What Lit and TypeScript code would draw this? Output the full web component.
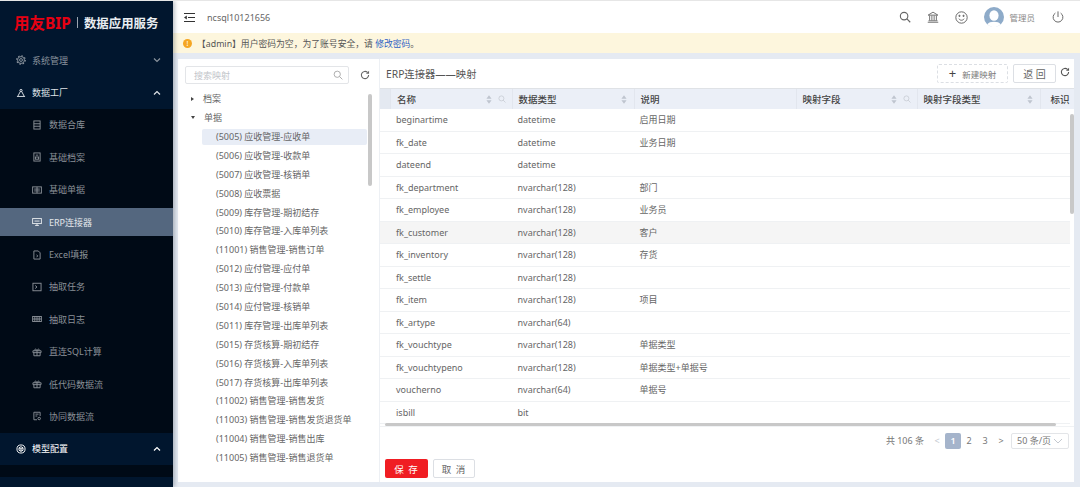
import { LitElement, css, html, svg, type TemplateResult } from 'lit'
import { customElement } from 'lit/decorators.js'

type NavItem = { label: string; icon: TemplateResult; active?: boolean }

const stroke = (body: TemplateResult, size = 10): TemplateResult => html`
  <svg width=${size} height=${size} viewBox="0 0 16 16" fill="none" stroke="currentColor" stroke-width="1.500">${body}</svg>
`

const gear = stroke(svg`<circle cx="8" cy="8" r="5.500"/><circle cx="8" cy="8" r="6.800" stroke-dasharray="2.400 2.900" stroke-width="2"/><circle cx="8" cy="8" r="2.300"/>`)
const nodes = stroke(svg`<circle cx="8" cy="4" r="1.800"/><path d="M7 5.500L3 13M9 5.500l4 7.500M1.500 13.500h13"/>`)
const listDoc = stroke(svg`<rect x="3" y="1.500" width="10" height="13"/><path d="M3 6h10M3 10h10"/>`)
const archive = stroke(svg`<rect x="3" y="1.500" width="10" height="13"/><rect x="5.500" y="8" width="5" height="3.500"/><path d="M6 5h4"/>`)
const slip = stroke(svg`<rect x="1" y="3" width="14" height="10"/><path d="M8 3v10M3.500 6.500h9M3.500 9.500h9"/>`)
const monitor = stroke(svg`<rect x="1" y="2.500" width="14" height="8"/><path d="M8 10.500v3M5 13.500h6M4 6.500h8"/>`)
const fileDot = stroke(svg`<path d="M3 1.500h7l3 3v10H3z"/><path d="M7.500 7.500l1.500 2-1.500 2"/>`)
const terminal = stroke(svg`<rect x="1.500" y="2" width="13" height="12"/><path d="M5 5.500l3 2.500-3 2.500"/>`)
const logbook = stroke(svg`<rect x="1" y="4" width="14" height="8"/><path d="M8 4v8M1 8h14M4.500 4v8M11.500 4v8"/>`)
const gift = stroke(svg`<path d="M1.500 6h13v3h-13zM3 9v5h10V9M8 6v8M5 6c-2-3 2-4 3 0 1-4 5-3 3 0"/>`)
const fileFlow = stroke(svg`<path d="M13 8V2H3v12h5M5.500 5h5M5.500 8h3"/><circle cx="11.500" cy="12" r="2"/>`)
const cube = stroke(svg`<circle cx="8" cy="8" r="6.500"/><path d="M8 4.300l3.200 1.800v3.800L8 11.700 4.800 9.900V6.100zM4.800 6.100L8 8l3.200-1.900M8 8v3.700"/>`)

const SYSTEM: NavItem = { label: '系统管理', icon: gear }
const FACTORY: NavItem = { label: '数据工厂', icon: nodes }
const MODEL: NavItem = { label: '模型配置', icon: cube }

const SUB_ITEMS: NavItem[] = [
  { label: '数据合库', icon: listDoc },
  { label: '基础档案', icon: archive },
  { label: '基础单据', icon: slip },
  { label: 'ERP连接器', icon: monitor, active: true },
  { label: 'Excel填报', icon: fileDot },
  { label: '抽取任务', icon: terminal },
  { label: '抽取日志', icon: logbook },
  { label: '直连SQL计算', icon: gift },
  { label: '低代码数据流', icon: gift },
  { label: '协同数据流', icon: fileFlow },
]

const TREE_LEAVES = [
  '(5005) 应收管理-应收单',
  '(5006) 应收管理-收款单',
  '(5007) 应收管理-核销单',
  '(5008) 应收票据',
  '(5009) 库存管理-期初结存',
  '(5010) 库存管理-入库单列表',
  '(11001) 销售管理-销售订单',
  '(5012) 应付管理-应付单',
  '(5013) 应付管理-付款单',
  '(5014) 应付管理-核销单',
  '(5011) 库存管理-出库单列表',
  '(5015) 存货核算-期初结存',
  '(5016) 存货核算-入库单列表',
  '(5017) 存货核算-出库单列表',
  '(11002) 销售管理-销售发货',
  '(11003) 销售管理-销售发货退货单',
  '(11004) 销售管理-销售出库',
  '(11005) 销售管理-销售退货单',
]

const ROWS: [string, string, string][] = [
  ['beginartime', 'datetime', '启用日期'],
  ['fk_date', 'datetime', '业务日期'],
  ['dateend', 'datetime', ''],
  ['fk_department', 'nvarchar(128)', '部门'],
  ['fk_employee', 'nvarchar(128)', '业务员'],
  ['fk_customer', 'nvarchar(128)', '客户'],
  ['fk_inventory', 'nvarchar(128)', '存货'],
  ['fk_settle', 'nvarchar(128)', ''],
  ['fk_item', 'nvarchar(128)', '项目'],
  ['fk_artype', 'nvarchar(64)', ''],
  ['fk_vouchtype', 'nvarchar(128)', '单据类型'],
  ['fk_vouchtypeno', 'nvarchar(128)', '单据类型+单据号'],
  ['voucherno', 'nvarchar(64)', '单据号'],
  ['isbill', 'bit', ''],
]

const chevron = (up: boolean): TemplateResult => html`
  <svg class="chev" width="10" height="10" viewBox="0 0 10 10" fill="none" stroke="currentColor" stroke-width="1.200">
    <path d=${up ? 'M2 6.500L5 3.500l3 3' : 'M2 3.500L5 6.500l3-3'} />
  </svg>
`

const searchIcon = (size: number): TemplateResult => html`
  <svg width=${size} height=${size} viewBox="0 0 16 16" fill="none" stroke="currentColor" stroke-width="1.500">
    <circle cx="6.800" cy="6.800" r="5" /><path d="M10.300 10.300L15 15" />
  </svg>
`

const refresh = (size: number): TemplateResult => html`
  <svg width=${size} height=${size} viewBox="0 0 16 16" fill="none" stroke="currentColor" stroke-width="1.700">
    <path d="M13.800 8a5.800 5.800 0 1 1-1.800-4.200" /><path d="M14.500 1v5h-5z" fill="currentColor" stroke="none" />
  </svg>
`

const sorter = html`
  <svg class="sorter" width="6" height="9" viewBox="0 0 7 10" fill="#bfc5cf"><path d="M3.500 0L6.500 4H.5zM3.500 10L.5 6h6z" /></svg>
`

@customElement('app-root')
export class AppRoot extends LitElement {
  private navRow(item: NavItem, cls: string, open?: boolean) {
    return html`
      <div class="nav-row ${cls}">
        <div class="nav-inner ${item.active ? 'active' : ''}">
          <span class="nav-icon">${item.icon}</span>
          <span class="nav-label">${item.label}</span>
          ${open === undefined ? '' : chevron(open)}
        </div>
      </div>
    `
  }

  private renderSidebar() {
    return html`
      <aside class="sidebar">
        <div class="logo">
          <span class="logo-brand">用友BIP</span>
          <span class="logo-sep"></span>
          <span class="logo-name">数据应用服务</span>
        </div>
        ${this.navRow(SYSTEM, 'top dim', false)} ${this.navRow(FACTORY, 'top', true)}
        <div class="submenu">${SUB_ITEMS.map((item) => this.navRow(item, 'sub'))}</div>
        ${this.navRow(MODEL, 'top open', true)}
        <div class="sidebar-gap"></div>
      </aside>
    `
  }

  private renderHeader() {
    return html`
      <header class="header">
        <svg class="fold" width="11" height="9" viewBox="0 0 11 9" fill="none" stroke="#333" stroke-width="1">
          <path d="M0 .5h11M4 4.500h7M0 8.500h11" /><path d="M2.800 2.500L0 4.500l2.800 2z" fill="#333" stroke="none" />
        </svg>
        <span class="conn">ncsql10121656</span>
        <span class="spacer"></span>
        <span class="hicon search">${searchIcon(12)}</span>
        <span class="hicon bank">
          <svg width="12" height="12" viewBox="0 0 16 16" fill="none" stroke="currentColor" stroke-width="1.200">
            <path d="M1.500 5.500L8 1.500l6.500 4zM3.500 6v6.500M6.500 6v6.500M9.500 6v6.500M12.500 6v6.500M2 13h12M1 15h14" />
          </svg>
        </span>
        <span class="hicon smile">
          <svg width="13" height="13" viewBox="0 0 16 16" fill="none" stroke="currentColor" stroke-width="1.200">
            <circle cx="8" cy="8" r="7" /><path d="M4.800 9.500c1.500 2.500 4.900 2.500 6.400 0" /><circle cx="5.500" cy="6" r=".8" fill="currentColor" /><circle cx="10.500" cy="6" r=".8" fill="currentColor" />
          </svg>
        </span>
        <svg class="avatar" width="20" height="20" viewBox="0 0 21 21">
          <circle cx="10.500" cy="10.500" r="10.500" fill="#8eabc9" />
          <ellipse cx="10.500" cy="9" rx="4.800" ry="5.500" fill="#fff" />
          <path d="M3.500 18c2-3.500 12-3.500 14 0-4 4-10 4-14 0z" fill="#fff" />
        </svg>
        <span class="user">管理员</span>
        <span class="hicon power">
          <svg width="12" height="12" viewBox="0 0 16 16" fill="none" stroke="currentColor" stroke-width="1.300">
            <path d="M8 .5v7.500M4.500 2.800a6.500 6.500 0 1 0 7 0" />
          </svg>
        </span>
      </header>
      <div class="notice">
        <span class="notice-dot">!</span>
        <span>【admin】用户密码为空，为了账号安全，请 <a class="link">修改密码</a>。</span>
      </div>
    `
  }

  private renderTree() {
    return html`
      <section class="tree-panel">
        <div class="tree-tools">
          <div class="tree-search"><span>搜索映射</span>${searchIcon(10)}</div>
          <span class="tree-refresh">${refresh(10)}</span>
        </div>
        <div class="tree-body">
          <div class="tree-node"><span class="caret right"></span>档案</div>
          <div class="tree-node"><span class="caret down"></span>单据</div>
          ${TREE_LEAVES.map(
            (leaf, i) => html`<div class="tree-leaf ${i === 0 ? 'selected' : ''}">${leaf}</div>`,
          )}
          <div class="tree-scroll"></div>
        </div>
      </section>
    `
  }

  private renderTable() {
    return html`
      <div class="table">
        <div class="thead">
          <div class="th stub"></div>
          <div class="th">名称<span class="th-tools">${sorter}<span class="th-search">${searchIcon(8)}</span></span></div>
          <div class="th">数据类型<span class="th-tools">${sorter}</span></div>
          <div class="th">说明</div>
          <div class="th">映射字段<span class="th-tools">${sorter}<span class="th-search">${searchIcon(8)}</span></span></div>
          <div class="th">映射字段类型<span class="th-tools">${sorter}</span></div>
          <div class="th last">标识</div>
        </div>
        <div class="tbody">
          ${ROWS.map(
            (row, i) => html`
              <div class="tr ${i === 5 ? 'hover' : ''}">
                <div class="td stub"></div>
                <div class="td">${row[0]}</div>
                <div class="td">${row[1]}</div>
                <div class="td">${row[2]}</div>
                <div class="td"></div>
                <div class="td"></div>
                <div class="td"></div>
              </div>
            `,
          )}
          <div class="v-scroll"></div>
          <div class="h-scroll"></div>
        </div>
      </div>
    `
  }

  private renderMain() {
    return html`
      <section class="main-panel">
        <div class="main-head">
          <span class="main-title">ERP连接器——映射</span>
          <span class="spacer"></span>
          <button class="btn dashed"><span class="plus">+</span>新建映射</button>
          <button class="btn back">返 回</button>
          <span class="main-refresh">${refresh(10)}</span>
        </div>
        ${this.renderTable()}
        <div class="pager">
          <span class="total">共 106 条</span>
          <span class="pg muted">&lt;</span>
          <span class="pg current">1</span>
          <span class="pg">2</span>
          <span class="pg">3</span>
          <span class="pg">&gt;</span>
          <span class="size">50 条/页 <svg width="10" height="10" viewBox="0 0 10 10" fill="none" stroke="#c4c9d0"><path d="M1 3l4 4 4-4" /></svg></span>
        </div>
        <div class="actions">
          <button class="btn save">保 存</button>
          <button class="btn cancel">取 消</button>
        </div>
      </section>
    `
  }

  render() {
    return html`
      <div class="app">
        ${this.renderSidebar()}
        <div class="content">
          ${this.renderHeader()}
          <div class="workspace">${this.renderTree()}${this.renderMain()}</div>
        </div>
      </div>
    `
  }

  static styles = css`
    :host {
      display: block;
      font-family: 'Noto Sans', 'Noto Sans CJK SC', sans-serif;
      font-size: 9px;
      color: #555;
    }

    .app {
      display: flex;
      height: 487px;
      width: 1080px;
      overflow: hidden;
      border-top: 1px solid #e6e6e6;
      box-sizing: border-box;
    }

    .spacer {
      flex: 1;
    }

    .sidebar {
      width: 173px;
      flex: none;
      background: #01162e;
      box-shadow: 2px 0 4px rgba(0, 21, 41, 0.25);
      z-index: 1;
      display: flex;
      flex-direction: column;
    }

    .logo {
      height: 43px;
      display: flex;
      align-items: center;
      padding-left: 14px;
      gap: 6px;
    }

    .logo-brand {
      color: #e60012;
      font-size: 15.500px;
      font-weight: 700;
      white-space: nowrap;
    }

    .logo-sep {
      width: 1px;
      height: 11px;
      background: #9aa4b0;
    }

    .logo-name {
      color: #e9edf1;
      font-size: 12.400px;
      font-weight: 700;
      white-space: nowrap;
    }

    .nav-row {
      height: 32.400px;
      display: flex;
      align-items: center;
      flex: none;
      color: #8a9097;
    }

    .nav-inner {
      flex: 1;
      height: 28px;
      display: flex;
      align-items: center;
    }

    .nav-row.top .nav-inner {
      padding-left: 16px;
    }

    .nav-row.top {
      color: #dfe3e7;
    }

    .nav-row.top.dim {
      color: #8a939d;
    }

    .nav-row.sub .nav-inner {
      padding-left: 32px;
    }

    .nav-inner.active {
      background: #54677f;
      color: #e4e8ec;
    }

    .nav-row.open {
      color: #fff;
    }

    .nav-icon {
      width: 10px;
      height: 10px;
      display: flex;
      margin-right: 6px;
    }

    .nav-row.sub .nav-icon {
      margin-right: 7px;
    }

    .nav-label {
      flex: 1;
      white-space: nowrap;
    }

    .chev {
      margin-right: 11px;
    }

    .submenu {
      background: #000a16;
    }

    .sidebar-gap {
      height: 12px;
      background: #000a16;
      flex: none;
    }

    .content {
      flex: 1;
      min-width: 0;
      display: flex;
      flex-direction: column;
      background: #e5eaf2;
    }

    .header {
      height: 32px;
      flex: none;
      background: #fff;
      display: flex;
      align-items: center;
      padding-left: 11px;
      color: #555;
    }

    .fold {
      margin-right: 12px;
    }

    .conn {
      color: #666;
    }

    .hicon {
      display: flex;
      color: #666;
    }

    .search {
      margin-right: 16px;
    }

    .bank {
      margin-right: 16px;
    }

    .smile {
      margin-right: 16px;
    }

    .avatar {
      margin-right: 5px;
    }

    .user {
      font-size: 8.500px;
      color: #888;
      margin-right: 17px;
    }

    .power {
      margin-right: 16px;
    }

    .notice {
      height: 20px;
      flex: none;
      background: #fdf6dd;
      display: flex;
      align-items: center;
      padding-left: 10px;
      gap: 5px;
      color: #555;
      font-size: 8.800px;
    }

    .notice-dot {
      width: 9px;
      height: 9px;
      border-radius: 50%;
      background: #f5a623;
      color: #fff;
      font-size: 7px;
      line-height: 9px;
      text-align: center;
    }

    .link {
      color: #2f5fc4;
    }

    .workspace {
      flex: 1;
      min-height: 0;
      display: flex;
      padding: 6px 6px 5px 5px;
    }

    .tree-panel {
      width: 202px;
      flex: none;
      background: #fff;
      border-right: 1px solid #edf0f4;
      box-sizing: border-box;
      display: flex;
      flex-direction: column;
      overflow: hidden;
    }

    .tree-tools {
      display: flex;
      align-items: center;
      padding: 7px 0 0 7px;
      flex: none;
    }

    .tree-search {
      width: 164px;
      height: 18px;
      border: 1px solid #e3e5e8;
      border-radius: 2px;
      display: flex;
      align-items: center;
      justify-content: space-between;
      padding: 0 5px 0 8px;
      box-sizing: border-box;
      color: #c2c5ca;
    }

    .tree-search svg {
      color: #aaa;
    }

    .tree-refresh {
      display: flex;
      margin-left: 11px;
      color: #666;
    }

    .tree-body {
      position: relative;
      flex: 1;
      padding-top: 5px;
    }

    .tree-node {
      height: 19px;
      display: flex;
      align-items: center;
      padding-left: 13px;
      color: #666;
      gap: 9px;
    }

    .caret {
      width: 0;
      height: 0;
    }

    .caret.right {
      border-left: 3px solid #444;
      border-top: 2.500px solid transparent;
      border-bottom: 2.500px solid transparent;
    }

    .caret.down {
      border-top: 3px solid #444;
      border-left: 2.500px solid transparent;
      border-right: 2.500px solid transparent;
    }

    .tree-leaf {
      height: 18.900px;
      margin: 0 12px 0 24px;
      padding-left: 14px;
      display: flex;
      align-items: center;
      color: #666;
      white-space: nowrap;
    }

    .tree-leaf.selected {
      background: #e8edf6;
      border-radius: 2px;
      height: 16px;
      margin-top: 1.500px;
      margin-bottom: 1.400px;
    }

    .tree-scroll {
      position: absolute;
      right: 7px;
      top: 10px;
      width: 4px;
      height: 92px;
      border-radius: 2px;
      background: #c8c8c8;
    }

    .main-panel {
      flex: 1;
      min-width: 0;
      background: #fff;
      display: flex;
      flex-direction: column;
    }

    .main-head {
      height: 29px;
      flex: none;
      display: flex;
      align-items: center;
      padding-left: 6px;
      box-sizing: border-box;
    }

    .main-title {
      font-size: 10.300px;
      color: #555;
    }

    .btn {
      font: inherit;
      background: #fff;
      box-sizing: border-box;
      padding: 0;
      display: flex;
      align-items: center;
      justify-content: center;
    }

    .dashed {
      width: 71px;
      height: 19px;
      border: 1px dashed #dcdfe4;
      border-radius: 2px;
      color: #777;
      font-size: 8.500px;
      gap: 6px;
    }

    .plus {
      font-size: 13px;
      line-height: 1;
      color: #444;
    }

    .back {
      width: 43px;
      height: 19px;
      border: 1px solid #dcdfe4;
      border-radius: 2px;
      margin-left: 5px;
      color: #666;
      font-size: 10px;
    }

    .main-refresh {
      display: flex;
      margin: 0 4px;
      color: #555;
      padding-bottom: 3px;
    }

    .table {
      height: 337px;
      flex: none;
      display: flex;
      flex-direction: column;
      overflow: hidden;
      border-top: 1px solid #dfe2e6;
    }

    .thead,
    .tr {
      display: grid;
      grid-template-columns: 10px 121.500px 122px 162px 121px 123px 1fr;
    }

    .thead {
      height: 20px;
      flex: none;
      background: #ebeff7;
    }

    .th {
      display: flex;
      align-items: center;
      padding-left: 6px;
      font-weight: 500;
      color: #444;
      font-size: 9.500px;
      border-left: 1px solid #e2e6ee;
      box-sizing: border-box;
      white-space: nowrap;
    }

    .th.stub {
      border-left: 0;
      padding: 0;
      background: #e4e9f1;
    }

    .th.last {
      padding-left: 10px;
    }

    .th-tools {
      margin-left: auto;
      display: flex;
      align-items: center;
      gap: 6px;
      padding-right: 7px;
      color: #c6cad1;
    }

    .th-search {
      display: flex;
      margin-right: -1px;
    }

    .tbody {
      position: relative;
      flex: 1;
      min-height: 0;
    }

    .tr {
      height: 22.500px;
      margin-right: 4px;
      border-bottom: 1px solid #eff1f3;
      box-sizing: border-box;
    }

    .tr.hover {
      background: #f5f5f5;
    }

    .td {
      display: flex;
      align-items: center;
      padding-left: 6px;
      color: #666;
      white-space: nowrap;
    }

    .td.stub {
      padding: 0;
    }

    .v-scroll {
      position: absolute;
      right: 0;
      top: 5px;
      width: 4px;
      height: 100px;
      background: #c8c8c8;
      border-radius: 2px;
    }

    .h-scroll {
      position: absolute;
      left: 5px;
      right: 18px;
      bottom: 0;
      height: 3px;
      background: #c8c8c8;
      border-radius: 2px;
    }

    .pager {
      height: 28px;
      flex: none;
      display: flex;
      align-items: center;
      justify-content: flex-end;
      border-top: 1px solid #f0f2f4;
      padding-right: 5px;
      box-sizing: border-box;
      color: #777;
    }

    .total {
      margin-right: 5px;
    }

    .pg {
      width: 16px;
      height: 16px;
      display: flex;
      align-items: center;
      justify-content: center;
      border-radius: 2px;
    }

    .pg.muted {
      color: #c4c9d0;
    }

    .pg.current {
      background: #a5b4cb;
      color: #fff;
      font-weight: 600;
    }

    .size {
      width: 58px;
      height: 16px;
      border: 1px solid #e3e5e8;
      border-radius: 2px;
      margin-left: 2px;
      box-sizing: border-box;
      display: flex;
      align-items: center;
      justify-content: center;
      gap: 2px;
      color: #777;
    }

    .actions {
      display: flex;
      gap: 5px;
      padding: 5px 0 0 5px;
    }

    .save {
      width: 43px;
      height: 19px;
      background: #f01d23;
      border: 0;
      border-radius: 2px;
      color: #fff;
      font-size: 9.500px;
      letter-spacing: 1px;
    }

    .cancel {
      width: 42px;
      height: 19px;
      border: 1px solid #dcdfe4;
      border-radius: 2px;
      color: #666;
      font-size: 9.500px;
      letter-spacing: 1px;
    }
  `
}
